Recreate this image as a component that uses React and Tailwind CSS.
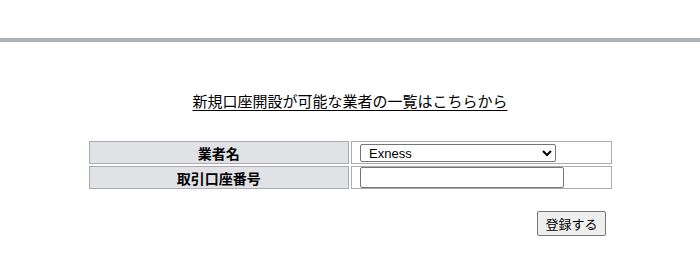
import React, { useState } from 'react';

const App = () => {
  const [broker, setBroker] = useState('Exness');
  const [account, setAccount] = useState('');

  return (
    <div className="min-h-screen bg-white text-black" style={{ fontFamily: '"Noto Sans CJK JP", "Liberation Sans", sans-serif' }}>
      <div className="h-[38px]"></div>
      <div className="h-[4px] bg-[#adb1b8]"></div>

      <div className="pt-[46px] text-center">
        <a href="#" className="text-[15px] leading-[20px] text-black underline underline-offset-[3px]">
          新規口座開設が可能な業者の一覧はこちらから
        </a>
      </div>

      <table className="mx-auto mt-[27px] w-[527px] border-separate border-spacing-[2px] text-[14px]">
        <tbody>
          <tr>
            <th className="h-[23px] w-1/2 border border-[#a9abb0] bg-[#e1e2e6] p-0 text-center font-bold leading-[20px]">
              業者名
            </th>
            <td className="h-[23px] w-1/2 border border-[#a9abb0] pl-[8px] pr-[7px] py-0">
              <select
                value={broker}
                onChange={(e) => setBroker(e.target.value)}
                className="block h-[18px] w-[196px] rounded-[2px] border border-[#767676] bg-white pl-[4px] text-[13px] leading-[16px] text-black"
                style={{ fontFamily: '"Liberation Sans", Arial, sans-serif' }}
              >
                <option>Exness</option>
                <option>XM</option>
                <option>TitanFX</option>
              </select>
            </td>
          </tr>
          <tr>
            <th className="h-[23px] border border-[#a9abb0] bg-[#e1e2e6] p-0 text-center font-bold leading-[20px]">
              取引口座番号
            </th>
            <td className="h-[23px] border border-[#a9abb0] pl-[8px] pr-[7px] py-0">
              <input
                type="text"
                value={account}
                onChange={(e) => setAccount(e.target.value)}
                className="block h-[21px] w-[204px] rounded-[2px] border border-[#767676] bg-white px-[2px] text-[13px]"
              />
            </td>
          </tr>
        </tbody>
      </table>

      <div className="mx-auto mt-[20px] flex w-[527px] justify-end pr-[8px]">
        <button className="h-[25px] rounded-[2px] border border-[#767676] bg-[#efefef] px-[7px] text-[13px] leading-[18px] text-black">
          登録する
        </button>
      </div>
    </div>
  );
};

export default App;
